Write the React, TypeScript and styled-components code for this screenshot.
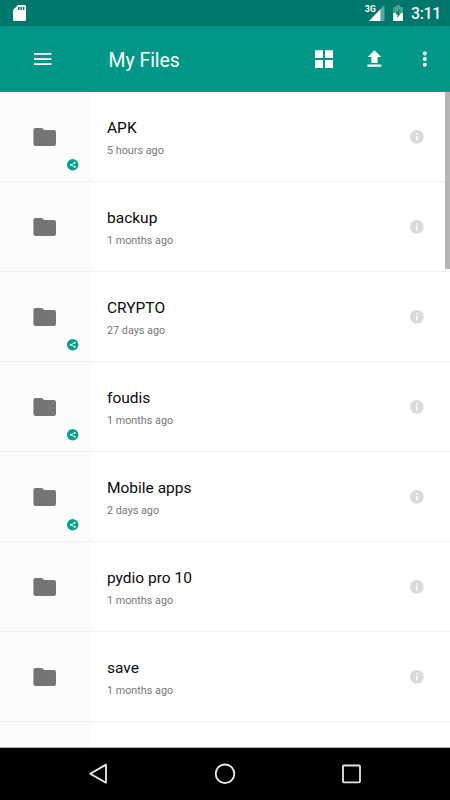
import React from "react";
import styled, { createGlobalStyle } from "styled-components";

const GlobalStyle = createGlobalStyle`
  *, *::before, *::after { box-sizing: border-box; }
  body { margin: 0; background: #fff; font-family: Roboto, "Noto Sans", sans-serif; }
  svg { display: block; }
`;

const Screen = styled.div`
  display: flex;
  flex-direction: column;
  width: 450px;
  height: 800px;
  overflow: hidden;
  background: #fff;
`;

const StatusBar = styled.header`
  display: flex;
  align-items: flex-start;
  justify-content: space-between;
  flex: none;
  height: 26px;
  padding: 0 9px 0 13px;
  background: #00776b;
`;

const StatusGroup = styled.div`
  display: flex;
  align-items: flex-start;
`;

const StatusIcon = styled.svg<{ $gap?: number }>`
  margin-right: ${(p) => p.$gap ?? 0}px;
`;

const NetworkLabel = styled.span`
  width: 11px;
  margin: 5px -7px 0 0;
  font-size: 8.5px;
  line-height: 8px;
  font-weight: 700;
  color: #fff;
`;

const Clock = styled.time`
  width: 30px;
  font-size: 16px;
  line-height: 28px;
  letter-spacing: -0.4px;
  font-weight: 500;
  color: #f2f8f7;
  white-space: nowrap;
`;

const AppBar = styled.nav`
  display: flex;
  align-items: center;
  flex: none;
  height: 66px;
  padding: 0 13px 0 30px;
  background: #009788;
`;

const IconButton = styled.button<{ $gap?: number }>`
  display: flex;
  flex: none;
  padding: 0;
  border: 0;
  background: none;
  margin-right: ${(p) => p.$gap ?? 0}px;
`;

const Title = styled.h1`
  flex: 1;
  margin: 3px 0 0;
  font-size: 19.4px;
  line-height: 24px;
  font-weight: 400;
  color: #fff;
`;

const FileArea = styled.main`
  position: relative;
  height: 656px;
  flex: none;
  overflow: hidden;
  border-bottom: 1px solid #a9b5b2;
`;

const FileList = styled.ul`
  margin: 0;
  padding: 0;
  list-style: none;
`;

const FileRow = styled.li`
  display: flex;
  height: 90px;
  border-bottom: 1px solid #f0f0f0;
`;

const Thumbnail = styled.div`
  position: relative;
  display: flex;
  flex: none;
  width: 90px;
  padding: 35px 0 0 33px;
  background: #fcfcfc;
`;

const ShareBadge = styled.svg`
  position: absolute;
  right: 11px;
  bottom: 10px;
`;

const FileText = styled.div`
  flex: 1;
  padding: 25px 0 0 17px;
`;

const FileName = styled.div`
  font-size: 15.5px;
  line-height: 22px;
  color: #0a0a0a;
`;

const FileDate = styled.div`
  margin-top: 5px;
  font-size: 10.8px;
  line-height: 14px;
  color: #777;
`;

const InfoButton = styled.button`
  display: flex;
  margin: 37px 25px 0 0;
  padding: 0;
  border: 0;
  background: none;
  height: 16px;
`;

const ScrollThumb = styled.div`
  position: absolute;
  top: 0;
  right: 0;
  width: 5px;
  height: 177px;
  background: #b5b5b5;
`;

const NavBar = styled.footer`
  display: flex;
  flex: none;
  height: 52px;
  padding: 14px 87px 0;
  justify-content: space-between;
  align-items: flex-start;
  background: #000;
`;

const SdCardIcon = () => (
  <StatusIcon width="13" height="26" viewBox="0 0 13 26">
    <path fill="#fff" fillRule="evenodd" d="M5 5h6.7Q13 5 13 6.3v13.4Q13 21 11.7 21H1.3Q0 21 0 19.7V10zM4.8 7v3h1.7V7zM7.4 7v3h1.5V7zM9.9 7v3h1.5V7z" />
  </StatusIcon>
);

const SignalIcon = () => (
  <StatusIcon $gap={8} width="16" height="26" viewBox="0 0 16 26">
    <path fill="#5da8a0" d="M11.5 9L15.5 5v16h-4z" />
    <path fill="#fff" d="M0 21L11.5 9v12z" />
  </StatusIcon>
);

const BatteryIcon = () => (
  <StatusIcon $gap={7} width="11" height="26" viewBox="0 0 11 26">
    <path fill="#4a9f96" d="M.2 7h2.9V5.2h4V7H10v6H.2z" />
    <path fill="#fff" d="M.2 13H10v8H.2z" />
    <path fill="#00776b" d="M6.8 9L2.3 14.6h2.5L4 18.3 7.9 13.2H5.8z" />
  </StatusIcon>
);

const MenuIcon = () => (
  <svg width="26" height="26" viewBox="0 0 26 26">
    <path fill="#fff" d="M4 7h17.5v1.7H4zM4 12.3h17.5V14H4zM4 17.3h17.5V19H4z" />
  </svg>
);

const GridIcon = () => (
  <svg width="26" height="26" viewBox="0 0 26 26">
    <path fill="#fff" d="M4 4.2h8v7.8H4zM14 4.2h8v7.8h-8zM4 14h8v8H4zM14 14h8v8h-8z" />
  </svg>
);

const UploadIcon = () => (
  <svg width="26" height="26" viewBox="0 0 26 26">
    <path fill="#fff" d="M13.5 4.2l6.7 6.8h-3.6v6h-6.3v-6H6.7zM6.4 18.5h14v2.3h-14z" />
  </svg>
);

const MoreIcon = () => (
  <svg width="26" height="26" viewBox="0 0 26 26">
    <g fill="#fff">
      <circle cx="13.8" cy="7.4" r="2" />
      <circle cx="13.8" cy="13" r="2" />
      <circle cx="13.8" cy="18.8" r="2" />
    </g>
  </svg>
);

const FolderIcon = () => (
  <svg width="24" height="20" viewBox="0 0 24 20">
    <path fill="#757575" d="M2.4 1h6.5l2.3 2h9.6Q23 3 23 5.2v11.6q0 2.2-2.2 2.2H2.6Q.4 19 .4 16.8V3.2Q.4 1 2.4 1z" />
  </svg>
);

const SharedMark = () => (
  <ShareBadge width="12" height="12" viewBox="0 0 12 12">
    <circle cx="5.7" cy="5.7" r="5.7" fill="#00a08a" />
    <path fill="none" stroke="#fff" strokeWidth=".8" d="M7.7 3.8L4 5.8l3.7 2" />
    <g fill="#fff">
      <circle cx="7.7" cy="3.8" r="1" />
      <circle cx="4" cy="5.8" r="1" />
      <circle cx="7.7" cy="7.8" r="1" />
    </g>
  </ShareBadge>
);

const InfoIcon = () => (
  <svg width="16" height="16" viewBox="0 0 16 16">
    <circle cx="7.8" cy="7.8" r="6.9" fill="#dadada" />
    <path fill="#fff" d="M7 4.2h1.6v1.5H7zM7 7h1.6v4.2H7z" />
  </svg>
);

const BackIcon = () => (
  <svg width="24" height="24" viewBox="0 0 24 24">
    <path fill="none" stroke="#eee" strokeWidth="1.8" strokeLinejoin="round" d="M19 2.6v18.2L3.2 11.7z" />
  </svg>
);

const HomeIcon = () => (
  <svg width="24" height="24" viewBox="0 0 24 24">
    <circle cx="12" cy="11.8" r="9.3" fill="none" stroke="#eee" strokeWidth="1.8" />
  </svg>
);

const RecentsIcon = () => (
  <svg width="24" height="24" viewBox="0 0 24 24">
    <rect x="4" y="3.5" width="17" height="16.8" rx=".8" fill="none" stroke="#e4e4e4" strokeWidth="1.8" />
  </svg>
);

interface FileEntry {
  name: string;
  modified: string;
  shared?: boolean;
}

const files: FileEntry[] = [
  { name: "APK", modified: "5 hours ago", shared: true },
  { name: "backup", modified: "1 months ago" },
  { name: "CRYPTO", modified: "27 days ago", shared: true },
  { name: "foudis", modified: "1 months ago", shared: true },
  { name: "Mobile apps", modified: "2 days ago", shared: true },
  { name: "pydio pro 10", modified: "1 months ago" },
  { name: "save", modified: "1 months ago" },
];

export default function App() {
  return (
    <Screen>
      <GlobalStyle />
      <StatusBar>
        <SdCardIcon />
        <StatusGroup>
          <NetworkLabel>3G</NetworkLabel>
          <SignalIcon />
          <BatteryIcon />
          <Clock>3:11</Clock>
        </StatusGroup>
      </StatusBar>
      <AppBar>
        <IconButton $gap={52.5} aria-label="Menu"><MenuIcon /></IconButton>
        <Title>My Files</Title>
        <IconButton $gap={24} aria-label="Grid view"><GridIcon /></IconButton>
        <IconButton $gap={24} aria-label="Upload"><UploadIcon /></IconButton>
        <IconButton aria-label="More options"><MoreIcon /></IconButton>
      </AppBar>
      <FileArea>
        <FileList>
          {files.map((file) => (
            <FileRow key={file.name}>
              <Thumbnail>
                <FolderIcon />
                {file.shared && <SharedMark />}
              </Thumbnail>
              <FileText>
                <FileName>{file.name}</FileName>
                <FileDate>{file.modified}</FileDate>
              </FileText>
              <InfoButton aria-label={`Details of ${file.name}`}><InfoIcon /></InfoButton>
            </FileRow>
          ))}
          <FileRow><Thumbnail /></FileRow>
        </FileList>
        <ScrollThumb />
      </FileArea>
      <NavBar>
        <IconButton aria-label="Back"><BackIcon /></IconButton>
        <IconButton aria-label="Home"><HomeIcon /></IconButton>
        <IconButton aria-label="Recent apps"><RecentsIcon /></IconButton>
      </NavBar>
    </Screen>
  );
}
